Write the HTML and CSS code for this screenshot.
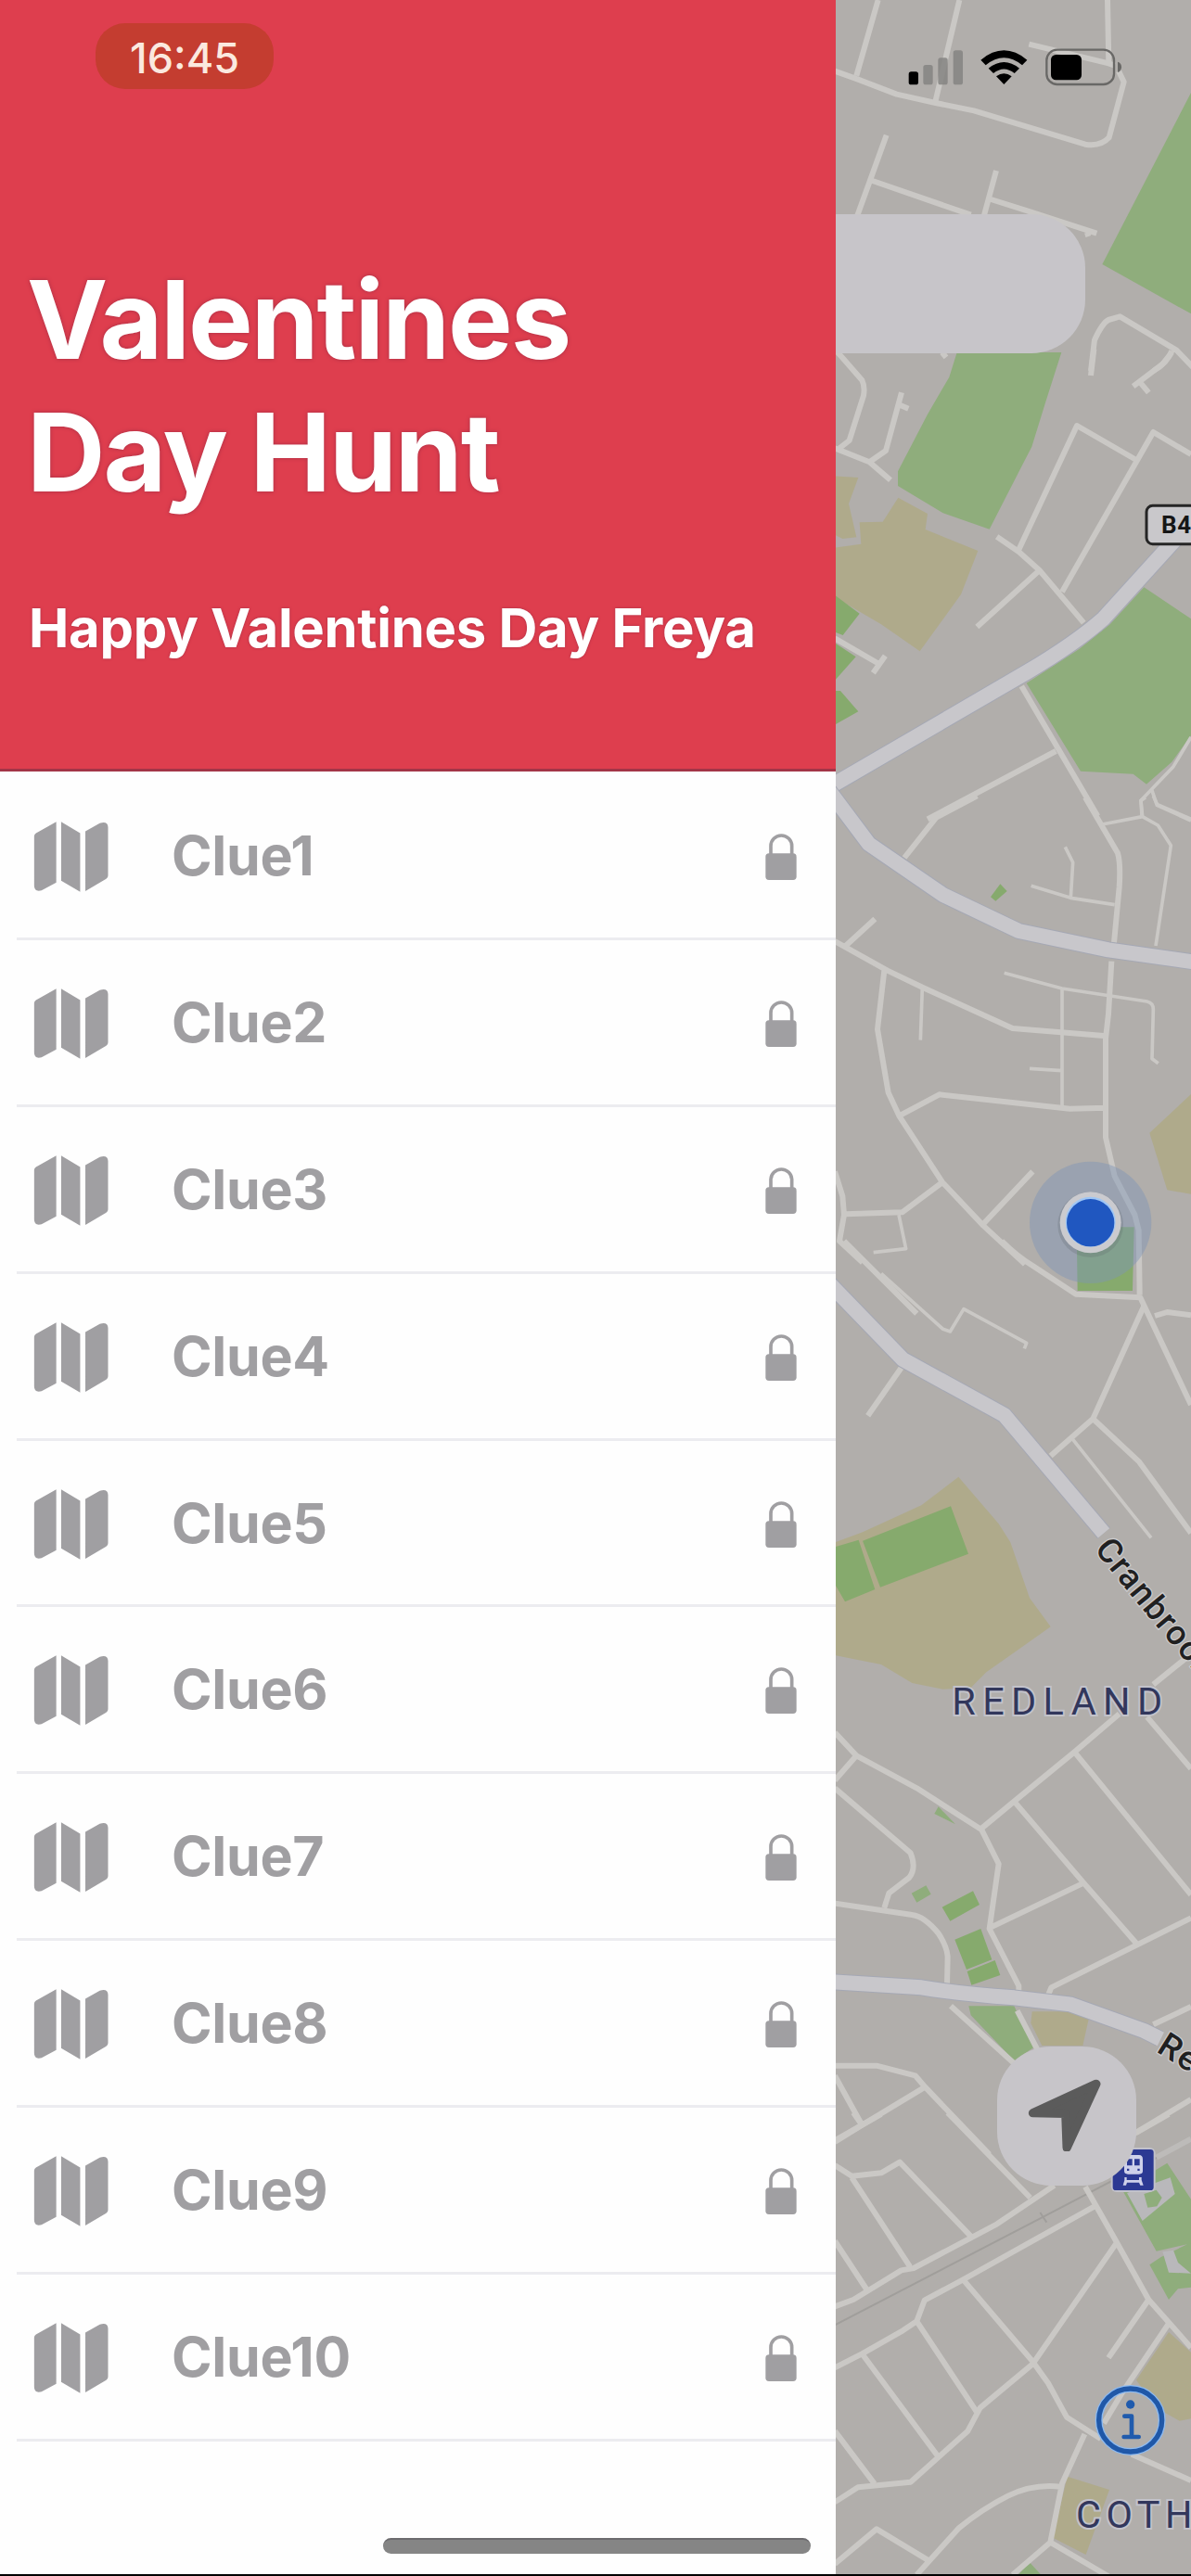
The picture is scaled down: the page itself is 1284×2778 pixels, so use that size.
FILE: index.html
```html
<!DOCTYPE html>
<html lang="en">
<head>
<meta charset="utf-8">
<title>Valentines Day Hunt</title>
<link rel="stylesheet" href="styles.css">
</head>
<body>
<svg class="defs" aria-hidden="true">
  <symbol id="icon-map" viewBox="108 168 244 230">
    <path d="M182 169V367L134 393Q110 399 110 377V216Q110 210 116 206ZM198 169L260 206V397L198 361ZM277 200L324 173Q350 165 351 186V344Q351 351 345 355L277 395Z"/>
  </symbol>
  <symbol id="icon-lock" viewBox="135 114 102 150">
    <path d="M153 182V154A34 34 0 0 1 221 154V182" fill="none" stroke="currentColor" stroke-width="11"/>
    <rect x="136" y="178" width="100" height="86" rx="11"/>
  </symbol>
</svg>
<main class="screen">
  <aside class="drawer">
    <header class="drawer-header">
      <div class="clock">16:45</div>
      <h1 class="title">Valentines<br>Day Hunt</h1>
      <p class="subtitle">Happy Valentines Day Freya</p>
    </header>
    <ul class="clues">
      <li class="clue"><svg class="map-icon"><use href="#icon-map"/></svg><span class="clue-name">Clue1</span><svg class="lock"><use href="#icon-lock"/></svg></li>
      <li class="clue"><svg class="map-icon"><use href="#icon-map"/></svg><span class="clue-name">Clue2</span><svg class="lock"><use href="#icon-lock"/></svg></li>
      <li class="clue"><svg class="map-icon"><use href="#icon-map"/></svg><span class="clue-name">Clue3</span><svg class="lock"><use href="#icon-lock"/></svg></li>
      <li class="clue"><svg class="map-icon"><use href="#icon-map"/></svg><span class="clue-name">Clue4</span><svg class="lock"><use href="#icon-lock"/></svg></li>
      <li class="clue"><svg class="map-icon"><use href="#icon-map"/></svg><span class="clue-name">Clue5</span><svg class="lock"><use href="#icon-lock"/></svg></li>
      <li class="clue"><svg class="map-icon"><use href="#icon-map"/></svg><span class="clue-name">Clue6</span><svg class="lock"><use href="#icon-lock"/></svg></li>
      <li class="clue"><svg class="map-icon"><use href="#icon-map"/></svg><span class="clue-name">Clue7</span><svg class="lock"><use href="#icon-lock"/></svg></li>
      <li class="clue"><svg class="map-icon"><use href="#icon-map"/></svg><span class="clue-name">Clue8</span><svg class="lock"><use href="#icon-lock"/></svg></li>
      <li class="clue"><svg class="map-icon"><use href="#icon-map"/></svg><span class="clue-name">Clue9</span><svg class="lock"><use href="#icon-lock"/></svg></li>
      <li class="clue"><svg class="map-icon"><use href="#icon-map"/></svg><span class="clue-name">Clue10</span><svg class="lock"><use href="#icon-lock"/></svg></li>
    </ul>
  </aside>
  <section class="map-pane">
    <svg class="map" viewBox="3 0 1149 8334" preserveAspectRatio="none">
      <!-- northern streets -->
      <g>
        <path class="park" d="M1152 300L865 855L1152 1015Z"/>
        <path class="road" d="M140 0L70 245M403 0L326 325M882 0L886 205M628 143L886 205L905 212M0 230L75 257L200 305L326 333L450 358L810 467Q860 475 887 445L935 265L918 230M167 437L72 700M122 585L440 695M522 552L482 700M505 645L625 683L847 755M820 765L816 752M828 1200L840 1100Q865 1045 885 1035L922 1024L1105 1133L1160 1190M1090 1135Q1075 1175 1030 1200"/>
      </g>
      <!-- B road and allotments -->
      <g transform="translate(0 1140)">
        <path class="park" d="M395 0H733L682 160L637 305L500 572L350 520L204 432V385L300 200L370 80Z"/>
        <path class="park" d="M1000 760L1152 862V1240L1090 1325L1008 1397L965 1364L795 1355L620 1070L790 960L890 880Z"/>
        <path class="school" d="M0 632L85 620L80 550L155 548L205 470L300 522L293 573L463 642L408 783L275 967L150 880L0 792ZM0 400L76 405L45 490L70 598L25 603L0 590Z"/>
        <path class="pitch" d="M0 785L80 845L26 915L0 905ZM0 940L68 985L0 1062ZM0 1095H18L76 1162L0 1205Z"/>
        <path class="road" d="M0 -10L20 12L88 90Q98 110 93 140L47 285L15 310M0 310L112 355L180 413M112 355L165 318L216 130M205 168L238 182M828 75L838 -10M1090 0L1060 38L965 110M988 98L1015 130M595 638L783 237L975 348M1152 330L1030 258L735 775M524 596L595 645L662 705L805 875M460 888L662 705M604 1080L850 1500M715 1290L300 1510M0 925L138 1005M163 982L124 1037M347 0L360 16"/>
        <path class="road thin" d="M1152 1245L1095 1340L990 1450L993 1500M1025 1415L1042 1465L1152 1515"/>
        <path class="casing" d="M1115 590L870 860Q780 940 620 1035L-20 1408"/>
        <path class="main" d="M1115 590L870 860Q780 940 620 1035L-20 1408"/>
        <rect class="shield" x="1008" y="496" width="200" height="124" rx="20"/>
        <text class="shield-text" x="1056" y="585">B4</text>
      </g>
      <!-- central streets -->
      <g transform="translate(0 2580)">
        <path class="pitch" d="M535 280L557 303L520 335L504 322Z"/>
        <path class="school" d="M1152 960L1018 1085L1075 1270L1152 1283Z"/>
        <path class="pitch" d="M782 1390L968 1390L963 1596H785Z"/>
        <path class="road" d="M460 -5L328 65L225 195M810 0L915 180Q925 215 920 290L903 470M895 530L885 700L876 780V1100L905 1225L970 1350L983 1400L986 1610M0 465L170 560L285 615L575 747L870 771M35 480L130 393M160 560L138 750L173 955L208 1030L348 1245L480 1385L615 1510M208 1030L338 961L760 1007L876 1004M348 1245L218 1342L35 1348M640 1210L480 1380M0 1210L25 1290L30 1350L15 1435L90 1505"/>
        <path class="road thin" d="M865 87L995 62L1045 90L1087 155L1038 480M995 62L990 10L1005 0M1030 -5L1042 22L1152 70M745 160L770 210L763 325L905 347M635 286L763 325M548 568L735 618L1010 660Q1030 665 1030 685L1026 845L1046 860M735 618V1005M630 877L735 884M283 615L277 785M207 1350L230 1460L125 1472"/>
        <path class="casing" d="M-40 -50L110 150L350 315L595 432L885 493L1160 532"/>
        <path class="main" d="M-40 -50L110 150L350 315L595 432L885 493L1160 532"/>
        <circle class="accuracy" cx="827" cy="1375" r="197"/>
        <circle class="dot-shadow" cx="827" cy="1382" r="106"/>
        <circle class="dot-ring" cx="827" cy="1375" r="99"/>
        <circle class="dot-glow" cx="827" cy="1373" r="81"/>
        <circle class="dot" cx="827" cy="1376" r="77"/>
      </g>
      <!-- Cranbrook Road and Redland -->
      <g transform="translate(0 4020)">
        <path class="school" d="M0 970L90 937L280 850L400 758L530 910L568 970L630 1150L698 1243L490 1390L440 1440L350 1445L250 1425L150 1365L0 1335Z"/>
        <path class="pitch" d="M0 985L77 962L130 1122L33 1162L0 1105ZM90 965L375 853L432 1007L147 1115Z"/>
        <path class="road" d="M540 -5Q590 45 640 75L780 167L988 178L1152 525M1035 237L1075 225L1152 235M1000 205L835 570L698 690M835 570L985 710L1152 940M30 -5L265 230M215 405L107 560M1135 1345L1030 1430"/>
        <path class="road thin" d="M150 100L350 280L373 288L417 215L620 325L613 343M770 637L1023 955"/>
        <path class="casing" d="M-20 130L220 378L548 558L870 940"/>
        <path class="main" d="M-20 130L220 378L548 558L870 940"/>
        <path id="cranbrook-line" class="guide" d="M838 992Q948 1134 1228 1464"/>
        <text class="road-label"><textPath href="#cranbrook-line">Cranbrook Road</textPath></text>
      </g>
      <!-- Redland green -->
      <g transform="translate(0 5460)">
        <path class="park" d="M335 385L390 442L322 408ZM248 665L295 640L311 668L265 695ZM433 1030H580L642 1165L580 1207L440 1060Z"/>
        <path class="pitch" d="M347 710L447 658L468 702L373 755ZM388 815L472 780L508 880L426 912ZM428 918L518 882L535 930L442 962Z"/>
        <path class="school" d="M638 1048L760 1048L822 1068L802 1158H670L634 1085Z"/>
        <path class="road" d="M0 145L70 220L265 325L475 460L530 570L500 780L595 965V985M70 220L0 300M0 325L245 535Q265 585 240 615L175 665L160 712M0 698L250 735Q290 740 335 795Q362 835 365 870L363 960M475 455L580 368L775 208L920 85M580 368L805 632L978 830M505 775L805 632M1152 745L700 970L690 995M775 208L1152 670M1010 95L1152 262M1030 1090L1152 1032M375 1030L590 1225M590 1045L660 1180M0 1223H135L260 1255L292 1292L500 1510M292 1292L88 1415L0 1465M0 1255L88 1415M965 1445L1152 1332"/>
        <path class="casing" d="M-10 952L280 970Q400 990 580 1003L760 1024L1000 1110L1050 1135"/>
        <path class="main" d="M-10 952L280 970Q400 990 580 1003L760 1024L1000 1110L1054 1137"/>
        <text class="district" x="379" y="87" textLength="680">REDLAND</text>
        <path id="redland-line" class="guide" d="M1037 1176L1290 1335"/>
        <text class="road-label"><textPath href="#redland-line">Redland</textPath></text>
      </g>
      <!-- railway and Cotham -->
      <g transform="translate(0 6840)">
        <path class="park" d="M930 245L1075 158L1152 275V418L1040 443ZM1018 487L1055 462L1152 415V560L1110 565L1080 600Z"/>
        <path class="plaza" d="M945 255L1085 205L1100 258L995 345ZM1060 445L1095 440L1110 480L1152 515L1080 512Z"/>
        <path class="park" d="M1000 258L1040 245L1058 270L1042 298L1012 302Z"/>
        <path class="school" d="M1080 705L1152 770V985L1115 992L1040 950L975 860ZM752 1172L888 1215L812 1425L705 1370Z"/>
        <path class="park" d="M630 1450L665 1488H595Z"/>
        <path class="rail" d="M0 682L640 350L1152 82M664 318L685 350"/>
        <path class="road" d="M365 -5L632 270M0 165L55 200L150 190L210 155L440 395M55 205L243 493M0 410L105 570M0 622L60 600L215 505L255 498L440 400L525 355L710 230M810 235L912 415L1015 600L1152 755M0 820L88 775L220 700L265 670L290 602L415 535L840 298M415 535L640 800L690 870L750 980L860 1050M265 670L460 965M88 775L332 1105M0 1025L128 1195M0 1255L75 1207L245 1190L430 1025L470 950L640 808L912 415M1015 600L885 788M1078 680L930 900L870 1000M960 1100L1152 1185M808 1035L735 1195L697 1385L575 1490M697 1385L885 1495M730 1205Q640 1195 560 1235T400 1340L265 1490M0 1455L135 1342L300 1442M60 -5L88 35L150 0M88 35L0 90M975 60L1080 0"/>
        <path class="road faint" d="M1040 140L1152 80"/>
        <rect class="station-edge" x="893" y="108" width="144" height="144" rx="18"/>
        <rect class="station" x="899" y="114" width="132" height="132" rx="10"/>
        <path class="station-glyph" fill-rule="evenodd" d="M948 132H984Q996 132 996 146V184Q996 194 984 194H948Q936 194 936 184V146Q936 132 948 132ZM945 145V166H962V145ZM969 145V166H986V145ZM945 176V183H952V176ZM979 176V183H986V176ZM944 204V213H984V204H992V213L998 230H988L984 221H945L942 230H932L937 213V204Z"/>
        <circle class="info-glow" cx="956" cy="990" r="102"/>
        <circle class="info-ring" cx="956" cy="990" r="102"/>
        <circle class="info-fill" cx="956" cy="939" r="14"/>
        <path class="info-line" d="M937 977H960V1044M935 1044H983"/>
        <text class="district" x="780" y="1337" textLength="600">COTHAM</text>
      </g>
    </svg>
    <div class="search-bar"></div>
    <div class="locate">
      <svg viewBox="624 1268 236 234"><path d="M640 1378L845 1284L750 1490L746 1380Z"/></svg>
    </div>
    <svg class="status-icons" viewBox="230 150 710 135">
      <rect x="238" y="232" width="31" height="42" rx="8"/>
      <g class="dim"><rect x="285" y="210" width="31" height="64" rx="8"/><rect x="333" y="187" width="31" height="87" rx="8"/><rect x="382" y="163" width="31" height="111" rx="8"/></g>
      <path d="M471 194Q546 132 621 194L605 211Q546 163 487 211ZM496 221Q546 181 596 221L580 237Q546 210 512 237ZM521 247Q546 228 571 247L546 273Z"/>
      <rect class="battery" x="684" y="161" width="218" height="112" rx="34"/>
      <rect x="698" y="177" width="99" height="82" rx="16"/>
      <path class="nub" d="M914 200Q926 203 926 217T914 234Z"/>
    </svg>
  </section>
  <div class="home-indicator"></div>
</main>
</body>
</html>
```
FILE: styles.css
```css
* { box-sizing: border-box; }

body {
  margin: 0;
  background: #000;
  font-family: Inter, "Liberation Sans", sans-serif;
}

.defs { position: absolute; width: 0; height: 0; }

.screen {
  position: relative;
  display: grid;
  grid-template-columns: 901px 383px;
  width: 1284px;
  height: 2778px;
  overflow: hidden;
  border-bottom: 2px solid #000;
}

/* Drawer */
.drawer { background: #fefefe; }

.drawer-header {
  height: 832px;
  padding: 25px 30px 0;
  background: #de3e4e;
  border-bottom: 3px solid #a33547;
  color: #fff;
}

.clock {
  width: 192px;
  height: 71px;
  margin-left: 73px;
  border-radius: 32px;
  background: #c43d30;
  color: #fbe9df;
  font-size: 45px;
  font-weight: 500;
  line-height: 76px;
  letter-spacing: 0;
  text-align: center;
}

.title {
  margin: 177px 0 0 -1px;
  font-size: 117px;
  font-weight: 700;
  line-height: 143px;
  letter-spacing: -2px;
  text-shadow: 0 0 4px #a52f45;
}

.subtitle {
  margin: 78px 0 0 1px;
  font-size: 58px;
  font-weight: 700;
  line-height: 80px;
  letter-spacing: -0.3px;
  white-space: nowrap;
  text-shadow: 0 0 3px #a52f45;
}

.clues {
  margin: 0 0 0 18px;
  padding: 2px 0 0;
  list-style: none;
  color: #a09fa2;
}

.clue {
  display: flex;
  align-items: center;
  height: 179.9px;
  padding: 3px 42px 0 18px;
  border-bottom: 3px solid #ececf0;
}

.map-icon { width: 81px; height: 76px; fill: currentColor; }

.clue-name {
  flex: 1;
  margin: 0 0 2px 68px;
  font-size: 59px;
  font-weight: 700;
  line-height: 72px;
  letter-spacing: -0.3px;
}

.lock { width: 34px; height: 50px; fill: currentColor; }

/* Map */
.map-pane { position: relative; background: #b1aeab; }

.map { display: block; width: 383px; height: 2778px; }

.park { fill: #8fad7c; }
.pitch { fill: #86aa6d; }
.school { fill: #afaa8b; }
.plaza { fill: #b9b8bb; }

.road {
  fill: none;
  stroke: #cac8c5;
  stroke-width: 18;
  stroke-linejoin: round;
}
.road.thin { stroke-width: 11; }
.road.faint { stroke: #bdbbb9; }

.casing, .main { fill: none; stroke-linejoin: round; }
.casing { stroke: #a5a8b4; stroke-width: 54; }
.main { stroke: #c8c7cb; stroke-width: 48; }
.rail { fill: none; stroke: #a09e9b; stroke-width: 6; }
.guide { fill: none; }

.shield { fill: #c9c8cb; stroke: #252525; stroke-width: 9; }
.shield-text { font: 700 78px Roboto, sans-serif; fill: #161616; letter-spacing: 2px; }

.road-label {
  font: 500 110px Roboto, sans-serif;
  letter-spacing: 4px;
  fill: #202021;
  stroke: #cbcacc;
  stroke-width: 8;
  paint-order: stroke;
}

.district {
  font: 400 124px Roboto, sans-serif;
  fill: #32375c;
  stroke: #c2c2ca;
  stroke-width: 12;
  paint-order: stroke;
}

.accuracy { fill: #7f95b5; fill-opacity: .45; }
.dot-shadow { fill: #60676c; fill-opacity: .25; }
.dot-ring { fill: #cbcbcf; }
.dot-glow { fill: #9fc6f5; }
.dot { fill: #2057c0; }

.station-edge { fill: #c2c2cb; }
.station { fill: #2c3993; }
.station-glyph { fill: #cfd1ea; }

.info-glow { fill: none; stroke: #8dbaf0; stroke-width: 24; }
.info-ring { fill: none; stroke: #2058a8; stroke-width: 16; }
.info-fill { fill: #205bad; }
.info-line {
  fill: none;
  stroke: #205bad;
  stroke-width: 14;
  stroke-linecap: round;
  stroke-linejoin: round;
}

.search-bar {
  position: absolute;
  top: 231px;
  left: 0;
  width: 269px;
  height: 150px;
  border-radius: 0 58px 58px 0;
  background: #c7c5c9;
}

.locate {
  position: absolute;
  top: 2207px;
  left: 174px;
  display: grid;
  place-content: center;
  width: 150px;
  height: 150px;
  border-radius: 58px;
  background: #c7c5c9;
}

.locate svg { width: 79px; height: 78px; transform: translate(-3px, -1px); }

.locate path {
  fill: #5b5b5b;
  stroke: #5b5b5b;
  stroke-width: 28;
  stroke-linejoin: round;
}

.status-icons {
  position: absolute;
  top: 50px;
  left: 75.7px;
  width: 236.7px;
  height: 45px;
}

.dim { fill: #858481; fill-opacity: .85; }
.battery { fill: none; stroke: #696866; stroke-width: 7; }
.nub { fill: #696866; }

.home-indicator {
  position: absolute;
  top: 2737px;
  left: 413px;
  width: 461px;
  height: 17px;
  border-radius: 9px;
  background: #858585;
  border-top: 2px solid #6c6b6e;
}
```
